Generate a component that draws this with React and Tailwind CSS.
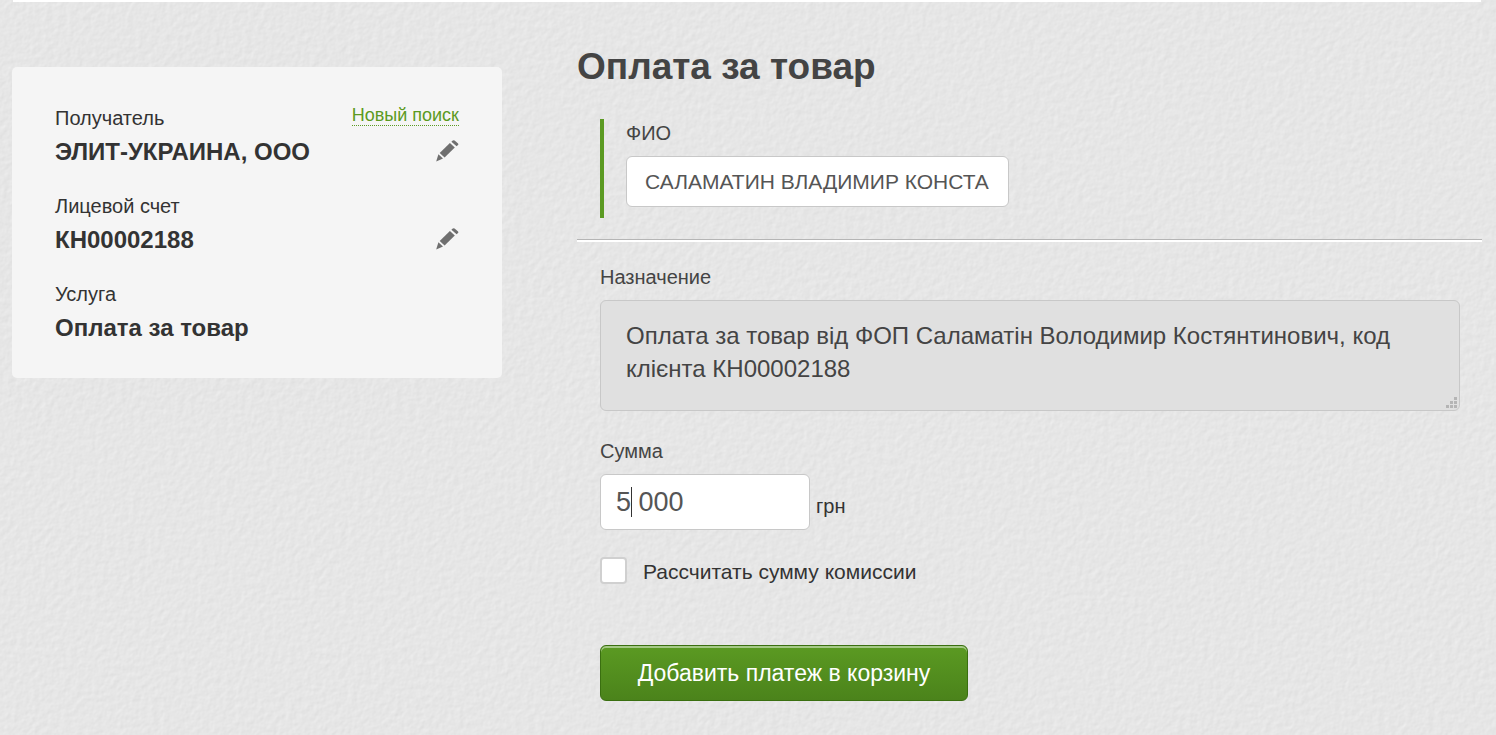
import React, { useState } from 'react';

const PencilIcon = () => (
    <svg width="23" height="22" viewBox="0 0 23 22" fill="#6f6f6f" aria-hidden="true">
        <path d="M16.4 0.8Q17.4 -0.2 18.6 0.6L21.8 3.2Q22.8 4.1 22 5L20.6 6.2L15.4 1.8Z" />
        <path d="M13.9 2.9L18.8 7.4L8.6 17.6L3.7 13Z" />
        <path d="M2.4 14.2L7 18.4L0.2 21.6Z" />
    </svg>
);

const ResizeGrip = () => (
    <svg className="absolute right-[3px] bottom-[3px] pointer-events-none" width="11" height="11" viewBox="0 0 11 11" fill="#b5b5b5" shapeRendering="crispEdges" aria-hidden="true">
        <path d="M8 0h3v3h-3zM4 4h3v3h-3zM8 4h3v3h-3zM0 8h3v3h-3zM4 8h3v3h-3zM8 8h3v3h-3z" />
    </svg>
);

// Paper grain behind the whole page
const PaperTexture = () => (
    <svg className="absolute inset-0 -z-10 w-full h-full" aria-hidden="true">
        <filter id="paper" x="0" y="0" width="100%" height="100%" colorInterpolationFilters="sRGB">
            <feTurbulence type="fractalNoise" baseFrequency="0.16" numOctaves="3" seed="4" result="noise" />
            <feDiffuseLighting in="noise" surfaceScale="0.08" diffuseConstant="1.275" lightingColor="#ffffff">
                <feDistantLight azimuth="225" elevation="45" />
            </feDiffuseLighting>
        </filter>
        <rect width="100%" height="100%" filter="url(#paper)" />
    </svg>
);

const Detail = ({ label, value, editLabel }) => (
    <div>
        <dt className="text-[20px] leading-[28px]">{label}</dt>
        <dd className="mt-1 flex items-center justify-between text-[24px] leading-[32px] font-bold">
            <span>{value}</span>
            {editLabel && (
                <button type="button" aria-label={editLabel} className="cursor-pointer pb-[2px]">
                    <PencilIcon />
                </button>
            )}
        </dd>
    </div>
);

const RecipientCard = () => (
    <aside className="relative w-1/3 shrink-0 mt-[65px] rounded-[5px] bg-[#f5f5f5] pl-[43px] pr-[43px] pt-[37px] pb-[34px]">
        <a href="#search" className="absolute right-[43px] top-[38px] text-[18px] leading-[20px] text-[#5b9a22] border-b border-dotted border-[#5b9a22]">
            Новый поиск
        </a>
        <dl className="flex flex-col gap-6">
            <Detail label="Получатель" value="ЭЛИТ-УКРАИНА, ООО" editLabel="Изменить получателя" />
            <Detail label="Лицевой счет" value="КН00002188" editLabel="Изменить лицевой счет" />
            <Detail label="Услуга" value="Оплата за товар" />
        </dl>
    </aside>
);

const PaymentForm = () => {
    const [name, setName] = useState('САЛАМАТИН ВЛАДИМИР КОНСТА');
    const [amount, setAmount] = useState('5 000');
    const [withFee, setWithFee] = useState(false);

    return (
        <form className="flex-1 min-w-0 pt-[41px] text-[#444]" onSubmit={(e) => e.preventDefault()}>
            <h1 className="text-[37px] leading-[48px] font-bold">Оплата за товар</h1>

            <div className="mt-7 ml-[23px] border-l-4 border-[#5b9a22] pl-[22px] pb-[11px]">
                <label htmlFor="fio" className="block text-[20px] leading-[28px]">ФИО</label>
                <input
                    id="fio"
                    value={name}
                    onChange={(e) => setName(e.target.value)}
                    className="block mt-[9px] w-[383px] h-[51px] px-[18px] rounded-[6px] border border-[#c8c8c8] bg-white text-[21px] text-[#555] outline-none"
                />
            </div>

            <hr className="mt-[21px] h-[3px] border-t border-b-2 border-t-[#b5b5b5] border-b-white" />

            <div className="ml-[23px] mr-[22px] pt-[21px]">
                <label htmlFor="purpose" className="block text-[20px] leading-[28px]">Назначение</label>
                <div className="relative mt-[9px]">
                    <textarea
                        id="purpose"
                        readOnly
                        value="Оплата за товар від ФОП Саламатін Володимир Костянтинович, код клієнта КН00002188"
                        className="block w-full h-[111px] resize-none overflow-hidden rounded-[6px] border border-[#c8c8c8] bg-[#e0e0e0] px-[25px] py-[18px] text-[24px] leading-[33px] outline-none"
                    />
                    <ResizeGrip />
                </div>

                <label htmlFor="amount" className="block mt-[26px] text-[20px] leading-[28px]">Сумма</label>
                <div className="mt-[9px] flex items-end gap-[6px]">
                    <div className="relative">
                        <input
                            id="amount"
                            value={amount}
                            onChange={(e) => setAmount(e.target.value)}
                            className="block w-[210px] h-[56px] px-[15px] rounded-[6px] border border-[#c8c8c8] bg-white text-[27px] text-[#555] outline-none"
                        />
                        <span className="absolute left-[31px] top-[13px] w-px h-[30px] bg-[#333]" />
                    </div>
                    <span className="pb-[10px] text-[20px] leading-[28px] text-[#333]">грн</span>
                </div>

                <label className="mt-[27px] flex w-fit items-start gap-4 text-[21px] leading-[30px] text-[#333]">
                    <input
                        type="checkbox"
                        checked={withFee}
                        onChange={(e) => setWithFee(e.target.checked)}
                        className="appearance-none w-[27px] h-[27px] rounded-[4px] border-2 border-[#d0d0d0] bg-white checked:bg-[#5b9a22]"
                    />
                    Рассчитать сумму комиссии
                </label>

                <button
                    type="submit"
                    className="block mt-[58px] w-[368px] h-[56px] rounded-[6px] border border-[#3a6f10] bg-linear-to-b from-[#5b9a22] to-[#4b831b] text-[23px] leading-[32px] text-white shadow-[inset_0_2px_0_#a5c986] cursor-pointer"
                >
                    Добавить платеж в корзину
                </button>
            </div>
        </form>
    );
};

const App = () => (
    <div className="relative isolate min-h-screen overflow-hidden bg-[#e6e6e6] pl-3 pr-[14px] pb-8 text-[#333] font-['Liberation_Sans',Arial,sans-serif]">
        <PaperTexture />
        <div className="mx-px h-[2px] bg-white" />
        <main className="flex items-start gap-[75px]">
            <RecipientCard />
            <PaymentForm />
        </main>
    </div>
);

export default App;
